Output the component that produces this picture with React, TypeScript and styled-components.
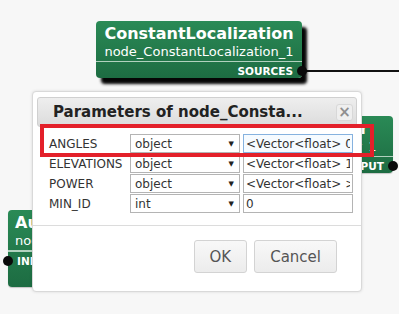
import styled, { createGlobalStyle } from 'styled-components';

const GlobalStyle = createGlobalStyle`
  html, body {
    margin: 0;
    padding: 0;
    background: #f7f7f7;
  }
  body {
    font-family: "DejaVu Sans", Verdana, sans-serif;
  }
`;

type Param = { name: string; type: string; value: string };

const params: Param[] = [
  { name: 'ANGLES', type: 'object', value: '<Vector<float> 0 30 60>' },
  { name: 'ELEVATIONS', type: 'object', value: '<Vector<float> 16.7 16.7>' },
  { name: 'POWER', type: 'object', value: '<Vector<float> >' },
  { name: 'MIN_ID', type: 'int', value: '0' },
];

const App = () => {
  return (
    <>
      <GlobalStyle />
      <Canvas>
        <Wires width="399" height="314">
          <line x1="302" y1="71" x2="399" y2="71" stroke="#111" strokeWidth="2" />
        </Wires>

        <Node $x={96} $y={21} $w={206} $h={57} $selected>
          <NodeHead>
            <NodeTitle>ConstantLocalization</NodeTitle>
            <NodeSub>node_ConstantLocalization_1</NodeSub>
          </NodeHead>
          <NodeDivider />
          <PortRow $side="right">
            SOURCES
            <PortDot $side="right" />
          </PortRow>
        </Node>

        <Node $x={223} $y={116} $w={170} $h={57}>
          <NodeHead $shift={-4}>
            <NodeTitle>SourceTracker</NodeTitle>
            <NodeSub>node_SourceTracker_1</NodeSub>
          </NodeHead>
          <NodeDivider />
          <PortRow $side="right">
            OUTPUT
            <PortDot $side="right" />
          </PortRow>
        </Node>

        <Node $x={8} $y={210} $w={204} $h={77} $align="left">
          <NodeHead>
            <NodeTitle>AudioStreamFromMic</NodeTitle>
            <NodeSub>node_AudioStreamFromMic_1</NodeSub>
          </NodeHead>
          <NodeDivider />
          <PortRow $side="left">
            INPUT
            <PortDot $side="left" />
          </PortRow>
        </Node>

        <Dialog>
          <TitleBar>
            <DialogTitle>Parameters of node_Consta...</DialogTitle>
            <CloseButton>×</CloseButton>
          </TitleBar>
          <Content>
            <ParamGrid>
              {params.map((p, i) => (
                <ParamRow key={p.name}>
                  <ParamLabel>{p.name}</ParamLabel>
                  <SelectBox>
                    <span>{p.type}</span>
                    <Caret>▼</Caret>
                  </SelectBox>
                  <ValueInput $focused={i === 0} defaultValue={p.value} readOnly />
                </ParamRow>
              ))}
            </ParamGrid>
          </Content>
          <ButtonPane>
            <Button>OK</Button>
            <Button>Cancel</Button>
          </ButtonPane>
        </Dialog>

        <Highlight />
      </Canvas>
    </>
  );
};

const Canvas = styled.div`
  position: relative;
  width: 399px;
  height: 314px;
  overflow: hidden;
  background: #f7f7f7;
`;

const Wires = styled.svg`
  position: absolute;
  left: 0;
  top: 0;
`;

const Node = styled.div<{ $x: number; $y: number; $w: number; $h: number; $selected?: boolean; $align?: 'left' | 'center' }>`
  position: absolute;
  left: ${p => p.$x}px;
  top: ${p => p.$y}px;
  width: ${p => p.$w}px;
  height: ${p => p.$h}px;
  box-sizing: border-box;
  display: flex;
  flex-direction: column;
  border-radius: 4px;
  background: linear-gradient(#2a8a56, #1d6c42);
  color: #fff;
  text-align: ${p => p.$align ?? 'center'};
  box-shadow: ${p => (p.$selected ? '5px 6px 3px #050505' : '0 1px 1px rgba(0,0,0,0.2)')};
`;

const NodeHead = styled.div<{ $shift?: number }>`
  display: flex;
  flex-direction: column;
  padding: 4px 7px 0;
  white-space: nowrap;
  transform: translateX(${p => p.$shift ?? 0}px);
`;

const NodeTitle = styled.div`
  font-size: 16px;
  font-weight: bold;
  line-height: 18px;
`;

const NodeSub = styled.div`
  font-size: 13px;
  line-height: 16px;
  margin-top: 1px;
`;

const NodeDivider = styled.div`
  height: 2px;
  margin-top: 1px;
  background: rgba(225, 240, 230, 0.75);
`;

const PortRow = styled.div<{ $side: 'left' | 'right' }>`
  position: relative;
  font-size: 10.5px;
  font-weight: bold;
  line-height: 13px;
  padding: 3px 9px 0;
  text-align: ${p => p.$side};
`;

const PortDot = styled.span<{ $side: 'left' | 'right' }>`
  position: absolute;
  top: 4px;
  ${p => p.$side}: -5px;
  width: 10px;
  height: 10px;
  border-radius: 50%;
  background: #0a0a0a;
`;

const Dialog = styled.div`
  position: absolute;
  left: 32px;
  top: 91px;
  width: 330px;
  height: 201px;
  box-sizing: border-box;
  display: flex;
  flex-direction: column;
  background: #fff;
  border: 1px solid #d9d9d9;
  border-radius: 4px;
  box-shadow: 0 0 3px rgba(0, 0, 0, 0.12);
  color: #333;
`;

const TitleBar = styled.div`
  display: flex;
  align-items: center;
  justify-content: space-between;
  height: 30px;
  box-sizing: border-box;
  margin: 5px 4px 0;
  padding: 0 3px 0 15px;
  border: 1px solid #d0d0d0;
  border-radius: 3px;
  background: linear-gradient(#eeeeee, #dcdcdc);
`;

const DialogTitle = styled.span`
  font-size: 15px;
  font-weight: bold;
  color: #222;
  white-space: nowrap;
`;

const CloseButton = styled.span`
  display: flex;
  align-items: center;
  justify-content: center;
  width: 17px;
  height: 17px;
  box-sizing: border-box;
  border: 1px solid #d8d8d8;
  border-radius: 3px;
  background: #efefef;
  color: #8f8f8f;
  font-size: 15px;
  font-weight: bold;
  line-height: 1;
`;

const Content = styled.div`
  flex: 1;
  padding: 7px 0 0 16px;
`;

const ParamGrid = styled.div`
  display: grid;
  row-gap: 1px;
`;

const ParamRow = styled.div`
  display: grid;
  grid-template-columns: 78px 110px 110px;
  column-gap: 3px;
  height: 19px;
  align-items: center;
  font-size: 12px;
`;

const ParamLabel = styled.span`
  color: #333;
  white-space: nowrap;
`;

const SelectBox = styled.div`
  display: flex;
  align-items: center;
  justify-content: space-between;
  height: 19px;
  box-sizing: border-box;
  padding: 0 5px 0 4px;
  border: 1px solid #b4b4b4;
  background: #fff;
  color: #333;
`;

const Caret = styled.span`
  font-size: 7px;
  color: #222;
`;

const ValueInput = styled.input<{ $focused?: boolean }>`
  width: 110px;
  height: 19px;
  box-sizing: border-box;
  padding: 0 2px;
  margin: 0;
  border: 1px solid ${p => (p.$focused ? '#86b2df' : '#b4b4b4')};
  background: ${p => (p.$focused ? '#f6fbff' : '#fff')};
  font-family: "DejaVu Sans", Verdana, sans-serif;
  font-size: 12px;
  color: #333;
  outline: none;
`;

const ButtonPane = styled.div`
  display: flex;
  justify-content: flex-end;
  gap: 7px;
  height: 66px;
  box-sizing: border-box;
  padding: 14px 24px 0 0;
  border-top: 1px solid #dcdcdc;
`;

const Button = styled.button`
  height: 33px;
  padding: 0 15px;
  border: 1px solid #d3d3d3;
  border-radius: 3px;
  background: linear-gradient(#f8f8f8, #ececec);
  font-family: "DejaVu Sans", Verdana, sans-serif;
  font-size: 15px;
  color: #555;
`;

const Highlight = styled.div`
  position: absolute;
  left: 40px;
  top: 124px;
  width: 334px;
  height: 33px;
  box-sizing: border-box;
  border: 4px solid #e3202a;
  pointer-events: none;
`;

export default App;
